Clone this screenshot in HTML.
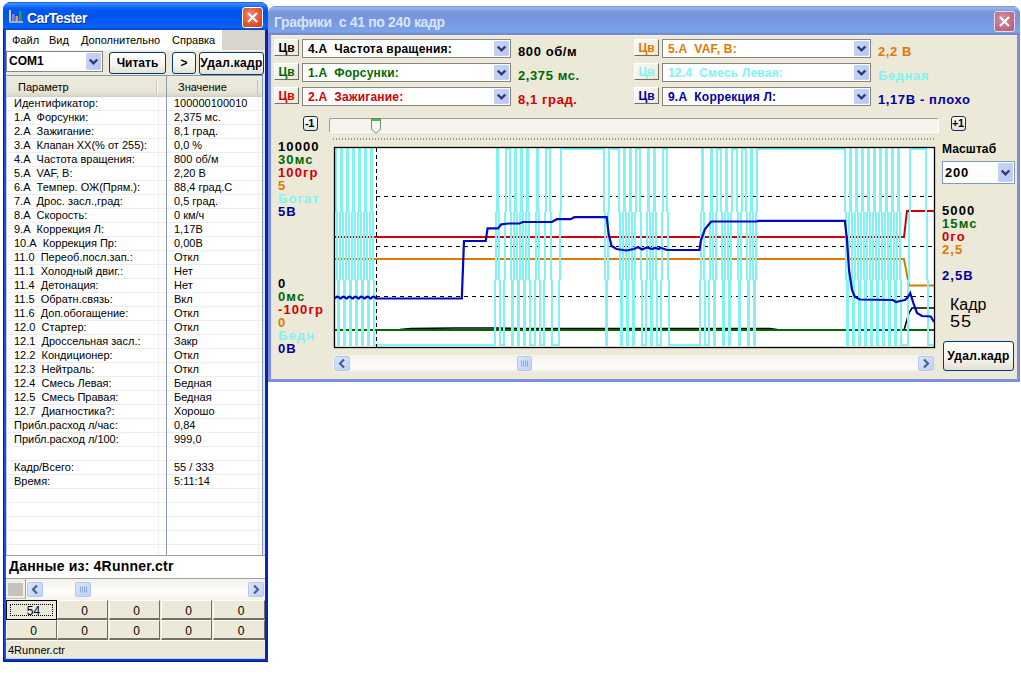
<!DOCTYPE html><html><head><meta charset="utf-8"><style>
*{margin:0;padding:0;box-sizing:border-box}
html,body{width:1021px;height:676px;overflow:hidden;background:#fff;font-family:"Liberation Sans",sans-serif;font-size:11px;color:#000}
.abs{position:absolute}
.t{position:absolute;white-space:pre;line-height:1}
.b{font-weight:bold}
.xpbtn{position:absolute;border:1px solid #003C74;border-radius:3px;background:linear-gradient(#FFFFFF,#F4F3EE 60%,#E3E1D6);font-weight:bold;text-align:center;white-space:pre}
.combo{position:absolute;background:#fff;border:1px solid #7F9DB9}
.ddb{position:absolute;border-radius:1px;background:linear-gradient(#C6D7FA,#B3CBF8 50%,#A9C3F6);border:1px solid #BBCDF1}
.sbb{position:absolute;border-radius:2px;background:linear-gradient(135deg,#DAE6FE,#BCD0F8);border:1px solid #B5C8EF}
.cbtn{position:absolute;background:linear-gradient(135deg,#FAFAF6,#ECE9D8);border-right:1px solid #716F64;border-bottom:1px solid #716F64;border-top:1px solid #fff;border-left:1px solid #fff;font-weight:bold;font-size:12px;text-align:center;line-height:17px}
.gb{position:absolute;background:#ECE9D8;border-top:1px solid #fff;border-left:1px solid #fff;border-right:1px solid #716F64;border-bottom:2px solid #716F64;text-align:center;font-size:12px;line-height:20px;padding-left:4px}
</style></head><body>

<div class="abs" style="left:3px;top:2px;width:265px;height:660px;background:linear-gradient(90deg,#0020B0 0px,#1848E0 1px,#2050E8 2px,#1848E0 3px) left/4px 100% no-repeat,linear-gradient(270deg,#0A1C98 0px,#0C24B0 1px,#0C26B8 3px) right/4px 100% no-repeat,#1848E0;border-radius:8px 8px 0 0;"></div>
<div class="abs" style="left:3px;top:2px;width:265px;height:28px;border-radius:8px 8px 0 0;background:linear-gradient(#0838C8 0px,#3D8EFF 1px,#2C80FF 3px,#0A62F6 6px,#0054EA 9px,#0056EE 16px,#065CF4 22px,#0A62F8 25px,#0050DC 27px,#0040C0 28px);"></div>
<svg class="abs" style="left:9px;top:10px" width="14" height="14">
<rect x="0" y="0" width="2" height="13" fill="#C8D8F0"/><rect x="0" y="11" width="14" height="2" fill="#9AB0D8"/>
<rect x="3" y="4" width="2.5" height="7" fill="#8C7FD8"/><rect x="6.5" y="6" width="2.5" height="5" fill="#F0A030"/><rect x="10" y="1" width="2.5" height="10" fill="#30A040"/></svg>
<div class="t b" style="left:27px;top:11px;font-size:14px;color:#fff;letter-spacing:-0.5px;text-shadow:1px 1px 0 #0A2A9A">CarTester</div>
<div class="abs" style="left:242px;top:7px;width:21px;height:21px;border:1px solid #fff;border-radius:3px;background:radial-gradient(circle at 40% 35%,#F08A68,#E0542E 60%,#C63C1C)"></div>
<svg class="abs" style="left:242px;top:7px" width="21" height="21"><path d="M6 6 L15 15 M15 6 L6 15" stroke="#fff" stroke-width="2.2"/></svg>
<div class="abs" style="left:6px;top:30px;width:259px;height:629px;background:#ECE9D8"></div>
<div class="abs" style="left:6px;top:30px;width:216px;height:20px;background:#fff"></div>
<div class="abs" style="left:222px;top:30px;width:43px;height:20px;background:#D8D5CC"></div>
<div class="abs" style="left:6px;top:50px;width:259px;height:1px;background:#F4F2EA"></div>
<div class="t" style="left:12px;top:35px">Файл</div>
<div class="t" style="left:49px;top:35px">Вид</div>
<div class="t" style="left:81px;top:35px">Дополнительно</div>
<div class="t" style="left:172px;top:35px">Справка</div>
<div class="combo" style="left:6px;top:51px;width:97px;height:21px;border-color:#858585"></div>
<div class="t b" style="left:9px;top:55px;font-size:12px">COM1</div>
<div class="ddb" style="left:86px;top:53px;width:15px;height:17px;border-color:#C4D0F4;background:linear-gradient(135deg,#C8D4F8,#B8C8F4)"></div>
<svg class="abs" style="left:86px;top:53px" width="15" height="17"><polyline points="3.7,6.5 7.5,10.3 11.3,6.5" fill="none" stroke="#2C3C6C" stroke-width="2.4"/></svg>
<div class="xpbtn" style="left:109px;top:52px;width:57px;height:22px;font-size:12px;line-height:20px">Читать</div>
<div class="xpbtn" style="left:172px;top:52px;width:24px;height:22px;font-size:12px;line-height:20px">&gt;</div>
<div class="xpbtn" style="left:199px;top:52px;width:65px;height:23px;font-size:12px;line-height:21px;letter-spacing:0.3px">Удал.кадр</div>
<div class="abs" style="left:6px;top:75px;width:257px;height:480px;background:#fff;border-top:1px solid #8A9AAA;border-left:1px solid #D0D0D0;border-right:1px solid #7F9DB9"></div>
<div class="abs" style="left:263px;top:75px;width:2px;height:480px;background:#D8E8F4"></div>
<div class="abs" style="left:7px;top:76px;width:255px;height:21px;background:linear-gradient(#EBEADB,#E8E6D8 80%,#D8D5C7);border-bottom:1px solid #D4D1C4"></div>
<div class="abs" style="left:156px;top:80px;width:1px;height:14px;background:#C8C5B6"></div>
<div class="abs" style="left:157px;top:80px;width:1px;height:14px;background:#fff"></div>
<div class="abs" style="left:257px;top:80px;width:1px;height:14px;background:#C8C5B6"></div>
<div class="t" style="left:18px;top:82px">Параметр</div>
<div class="t" style="left:178px;top:82px">Значение</div>
<div class="abs" style="left:7px;top:110px;width:255px;height:1px;background:#EDEDED"></div>
<div class="abs" style="left:7px;top:124px;width:255px;height:1px;background:#EDEDED"></div>
<div class="abs" style="left:7px;top:138px;width:255px;height:1px;background:#EDEDED"></div>
<div class="abs" style="left:7px;top:152px;width:255px;height:1px;background:#EDEDED"></div>
<div class="abs" style="left:7px;top:166px;width:255px;height:1px;background:#EDEDED"></div>
<div class="abs" style="left:7px;top:180px;width:255px;height:1px;background:#EDEDED"></div>
<div class="abs" style="left:7px;top:194px;width:255px;height:1px;background:#EDEDED"></div>
<div class="abs" style="left:7px;top:208px;width:255px;height:1px;background:#EDEDED"></div>
<div class="abs" style="left:7px;top:222px;width:255px;height:1px;background:#EDEDED"></div>
<div class="abs" style="left:7px;top:236px;width:255px;height:1px;background:#EDEDED"></div>
<div class="abs" style="left:7px;top:250px;width:255px;height:1px;background:#EDEDED"></div>
<div class="abs" style="left:7px;top:264px;width:255px;height:1px;background:#EDEDED"></div>
<div class="abs" style="left:7px;top:278px;width:255px;height:1px;background:#EDEDED"></div>
<div class="abs" style="left:7px;top:292px;width:255px;height:1px;background:#EDEDED"></div>
<div class="abs" style="left:7px;top:306px;width:255px;height:1px;background:#EDEDED"></div>
<div class="abs" style="left:7px;top:320px;width:255px;height:1px;background:#EDEDED"></div>
<div class="abs" style="left:7px;top:334px;width:255px;height:1px;background:#EDEDED"></div>
<div class="abs" style="left:7px;top:348px;width:255px;height:1px;background:#EDEDED"></div>
<div class="abs" style="left:7px;top:362px;width:255px;height:1px;background:#EDEDED"></div>
<div class="abs" style="left:7px;top:376px;width:255px;height:1px;background:#EDEDED"></div>
<div class="abs" style="left:7px;top:390px;width:255px;height:1px;background:#EDEDED"></div>
<div class="abs" style="left:7px;top:404px;width:255px;height:1px;background:#EDEDED"></div>
<div class="abs" style="left:7px;top:418px;width:255px;height:1px;background:#EDEDED"></div>
<div class="abs" style="left:7px;top:432px;width:255px;height:1px;background:#EDEDED"></div>
<div class="abs" style="left:7px;top:446px;width:255px;height:1px;background:#EDEDED"></div>
<div class="abs" style="left:7px;top:460px;width:255px;height:1px;background:#EDEDED"></div>
<div class="abs" style="left:7px;top:474px;width:255px;height:1px;background:#EDEDED"></div>
<div class="abs" style="left:7px;top:488px;width:255px;height:1px;background:#EDEDED"></div>
<div class="abs" style="left:7px;top:502px;width:255px;height:1px;background:#EDEDED"></div>
<div class="abs" style="left:7px;top:516px;width:255px;height:1px;background:#EDEDED"></div>
<div class="abs" style="left:7px;top:530px;width:255px;height:1px;background:#EDEDED"></div>
<div class="abs" style="left:7px;top:544px;width:255px;height:1px;background:#EDEDED"></div>
<div class="abs" style="left:158px;top:97px;width:1px;height:458px;background:#F0F0F0"></div>
<div class="abs" style="left:258px;top:97px;width:1px;height:458px;background:#F0F0F0"></div>
<div class="abs" style="left:166px;top:76px;width:1px;height:479px;background:#8C9CB0"></div>
<div class="t" style="left:14px;top:98px">Идентификатор:</div>
<div class="t" style="left:174px;top:98px">100000100010</div>
<div class="t" style="left:14px;top:112px">1.А  Форсунки:</div>
<div class="t" style="left:174px;top:112px">2,375 мс.</div>
<div class="t" style="left:14px;top:126px">2.А  Зажигание:</div>
<div class="t" style="left:174px;top:126px">8,1 град.</div>
<div class="t" style="left:14px;top:140px">3.А  Клапан ХХ(% от 255):</div>
<div class="t" style="left:174px;top:140px">0,0 %</div>
<div class="t" style="left:14px;top:154px">4.А  Частота вращения:</div>
<div class="t" style="left:174px;top:154px">800 об/м</div>
<div class="t" style="left:14px;top:168px">5.А  VAF, В:</div>
<div class="t" style="left:174px;top:168px">2,20 В</div>
<div class="t" style="left:14px;top:182px">6.А  Темпер. ОЖ(Прям.):</div>
<div class="t" style="left:174px;top:182px">88,4 град.С</div>
<div class="t" style="left:14px;top:196px">7.А  Дрос. засл.,град:</div>
<div class="t" style="left:174px;top:196px">0,5 град.</div>
<div class="t" style="left:14px;top:210px">8.А  Скорость:</div>
<div class="t" style="left:174px;top:210px">0 км/ч</div>
<div class="t" style="left:14px;top:224px">9.А  Коррекция Л:</div>
<div class="t" style="left:174px;top:224px">1,17В</div>
<div class="t" style="left:14px;top:238px">10.А  Коррекция Пр:</div>
<div class="t" style="left:174px;top:238px">0,00В</div>
<div class="t" style="left:14px;top:252px">11.0  Переоб.посл.зап.:</div>
<div class="t" style="left:174px;top:252px">Откл</div>
<div class="t" style="left:14px;top:266px">11.1  Холодный двиг.:</div>
<div class="t" style="left:174px;top:266px">Нет</div>
<div class="t" style="left:14px;top:280px">11.4  Детонация:</div>
<div class="t" style="left:174px;top:280px">Нет</div>
<div class="t" style="left:14px;top:294px">11.5  Обратн.связь:</div>
<div class="t" style="left:174px;top:294px">Вкл</div>
<div class="t" style="left:14px;top:308px">11.6  Доп.обогащение:</div>
<div class="t" style="left:174px;top:308px">Откл</div>
<div class="t" style="left:14px;top:322px">12.0  Стартер:</div>
<div class="t" style="left:174px;top:322px">Откл</div>
<div class="t" style="left:14px;top:336px">12.1  Дроссельная засл.:</div>
<div class="t" style="left:174px;top:336px">Закр</div>
<div class="t" style="left:14px;top:350px">12.2  Кондиционер:</div>
<div class="t" style="left:174px;top:350px">Откл</div>
<div class="t" style="left:14px;top:364px">12.3  Нейтраль:</div>
<div class="t" style="left:174px;top:364px">Откл</div>
<div class="t" style="left:14px;top:378px">12.4  Смесь Левая:</div>
<div class="t" style="left:174px;top:378px">Бедная</div>
<div class="t" style="left:14px;top:392px">12.5  Смесь Правая:</div>
<div class="t" style="left:174px;top:392px">Бедная</div>
<div class="t" style="left:14px;top:406px">12.7  Диагностика?:</div>
<div class="t" style="left:174px;top:406px">Хорошо</div>
<div class="t" style="left:14px;top:420px">Прибл.расход л/час:</div>
<div class="t" style="left:174px;top:420px">0,84</div>
<div class="t" style="left:14px;top:434px">Прибл.расход л/100:</div>
<div class="t" style="left:174px;top:434px">999,0</div>
<div class="t" style="left:14px;top:462px">Кадр/Всего:</div>
<div class="t" style="left:174px;top:462px">55 / 333</div>
<div class="t" style="left:14px;top:476px">Время:</div>
<div class="t" style="left:174px;top:476px">5:11:14</div>
<div class="abs" style="left:6px;top:555px;width:259px;height:24px;background:#fff;border-top:1px solid #A0A0A0;border-bottom:1px solid #A0A0A0"></div>
<div class="t b" style="left:9px;top:559px;font-size:14px;letter-spacing:0.2px">Данные из: 4Runner.ctr</div>
<div class="abs" style="left:6px;top:579px;width:259px;height:21px;background:linear-gradient(#F3F1EC,#FEFEFB 60%,#F3F1EC)"></div>
<div class="abs" style="left:6px;top:579px;width:20px;height:20px;background:#F0EEE4;border-right:1px solid #A8A490;border-bottom:1px solid #C8C4B4"></div>
<div class="abs" style="left:8px;top:583px;width:15px;height:13px;background:#C6C2BA"></div>
<div class="sbb" style="left:27px;top:582px;width:16px;height:15px"></div>
<svg class="abs" style="left:27px;top:582px" width="16" height="15"><polyline points="10.0,3.5 6.0,7.5 10.0,11.5" fill="none" stroke="#4D6185" stroke-width="2.2"/></svg>
<div class="sbb" style="left:75px;top:582px;width:16px;height:15px"></div>
<svg class="abs" style="left:75px;top:582px" width="16" height="15"><path d="M5.5 4.5v6M7.5 4.5v6M9.5 4.5v6M11.5 4.5v6" stroke="#8EA4D8" stroke-width="1"/></svg>
<div class="sbb" style="left:248px;top:582px;width:16px;height:15px"></div>
<svg class="abs" style="left:248px;top:582px" width="16" height="15"><polyline points="6.0,3.5 10.0,7.5 6.0,11.5" fill="none" stroke="#4D6185" stroke-width="2.2"/></svg>
<div class="gb" style="left:6px;top:600px;width:51px;height:20px;border:1px solid #000;">54</div>
<div class="abs" style="left:10px;top:604px;width:43px;height:12px;border:1px dotted #000"></div>
<div class="gb" style="left:57px;top:600px;width:51px;height:20px;">0</div>
<div class="gb" style="left:109px;top:600px;width:51px;height:20px;">0</div>
<div class="gb" style="left:161px;top:600px;width:51px;height:20px;">0</div>
<div class="gb" style="left:213px;top:600px;width:52px;height:20px;">0</div>
<div class="gb" style="left:6px;top:620px;width:51px;height:20px;">0</div>
<div class="gb" style="left:57px;top:620px;width:51px;height:20px;">0</div>
<div class="gb" style="left:109px;top:620px;width:51px;height:20px;">0</div>
<div class="gb" style="left:161px;top:620px;width:51px;height:20px;">0</div>
<div class="gb" style="left:213px;top:620px;width:52px;height:20px;">0</div>
<div class="abs" style="left:6px;top:640px;width:259px;height:19px;background:#ECE9D8;border-top:1px solid #fff"></div>
<div class="t" style="left:8px;top:645px">4Runner.ctr</div>
<div class="abs" style="left:3px;top:659px;width:265px;height:3px;background:linear-gradient(#1040D8,#0018A8)"></div>
<div class="abs" style="left:6px;top:658px;width:259px;height:1px;background:#B8D4F4"></div>
<div class="abs" style="left:3px;top:661px;width:265px;height:1px;background:#001EA0"></div>
<div class="abs" style="left:3px;top:30px;width:1px;height:632px;background:#001EA0"></div>
<div class="abs" style="left:268px;top:6px;width:752px;height:376px;background:#7F8FE0;border-radius:8px 8px 0 0"></div>
<div class="abs" style="left:268px;top:6px;width:752px;height:29px;border-radius:8px 8px 0 0;background:linear-gradient(#6E7EC8 0px,#9AB2F2 1px,#94AEEE 3px,#7A9CDC 5px,#7896D8 7px,#7A94E0 10px,#7898E2 16px,#7AA2E8 24px,#7AA4E8 26px,#7484D0 28px,#7080C8 29px)"></div>
<div class="t b" style="left:274px;top:15px;font-size:14px;letter-spacing:-0.35px;color:#D8E4F8">Графики  с 41 по 240 кадр</div>
<div class="abs" style="left:994px;top:11px;width:21px;height:21px;border:1px solid #E8D8F0;border-radius:3px;background:radial-gradient(circle at 40% 35%,#D88FA0,#C06C84 60%,#A85A74)"></div>
<svg class="abs" style="left:994px;top:11px" width="21" height="21"><path d="M6 6 L15 15 M15 6 L6 15" stroke="#fff" stroke-width="2.2"/></svg>
<div class="abs" style="left:271px;top:35px;width:746px;height:344px;background:#ECE9D8;border-top:1px solid #F4F6F0"></div>
<div class="cbtn" style="left:274px;top:39px;width:25px;height:17px;color:#000000">Цв</div>
<div class="combo" style="left:302px;top:39px;width:209px;height:19px;border-color:#858585"></div><div class="t b" style="left:308px;top:43px;font-size:12px;letter-spacing:0.2px;color:#000000">4.А  Частота вращения:</div><div class="ddb" style="left:494px;top:41px;width:15px;height:15px;border-color:#C4D0F4;background:linear-gradient(135deg,#C8D4F8,#B8C8F4)"></div><svg class="abs" style="left:494px;top:41px" width="15" height="15"><polyline points="3.7,5.5 7.5,9.3 11.3,5.5" fill="none" stroke="#2C3C6C" stroke-width="2.4"/></svg>
<div class="t b" style="left:518px;top:45px;font-size:13px;letter-spacing:0.6px;color:#000000">800 об/м</div>
<div class="cbtn" style="left:274px;top:63px;width:25px;height:17px;color:#006800">Цв</div>
<div class="combo" style="left:302px;top:63px;width:209px;height:19px;border-color:#858585"></div><div class="t b" style="left:308px;top:67px;font-size:12px;letter-spacing:0.2px;color:#006800">1.А  Форсунки:</div><div class="ddb" style="left:494px;top:65px;width:15px;height:15px;border-color:#C4D0F4;background:linear-gradient(135deg,#C8D4F8,#B8C8F4)"></div><svg class="abs" style="left:494px;top:65px" width="15" height="15"><polyline points="3.7,5.5 7.5,9.3 11.3,5.5" fill="none" stroke="#2C3C6C" stroke-width="2.4"/></svg>
<div class="t b" style="left:518px;top:69px;font-size:13px;letter-spacing:0.6px;color:#006800">2,375 мс.</div>
<div class="cbtn" style="left:274px;top:87px;width:25px;height:17px;color:#D00000">Цв</div>
<div class="combo" style="left:302px;top:87px;width:209px;height:19px;border-color:#858585"></div><div class="t b" style="left:308px;top:91px;font-size:12px;letter-spacing:0.2px;color:#D00000">2.А  Зажигание:</div><div class="ddb" style="left:494px;top:89px;width:15px;height:15px;border-color:#C4D0F4;background:linear-gradient(135deg,#C8D4F8,#B8C8F4)"></div><svg class="abs" style="left:494px;top:89px" width="15" height="15"><polyline points="3.7,5.5 7.5,9.3 11.3,5.5" fill="none" stroke="#2C3C6C" stroke-width="2.4"/></svg>
<div class="t b" style="left:518px;top:93px;font-size:13px;letter-spacing:0.6px;color:#D00000">8,1 град.</div>
<div class="cbtn" style="left:634px;top:39px;width:25px;height:17px;color:#E07800">Цв</div>
<div class="combo" style="left:662px;top:39px;width:209px;height:19px;border-color:#858585"></div><div class="t b" style="left:668px;top:43px;font-size:12px;letter-spacing:0.2px;color:#E07800">5.А  VAF, В:</div><div class="ddb" style="left:854px;top:41px;width:15px;height:15px;border-color:#C4D0F4;background:linear-gradient(135deg,#C8D4F8,#B8C8F4)"></div><svg class="abs" style="left:854px;top:41px" width="15" height="15"><polyline points="3.7,5.5 7.5,9.3 11.3,5.5" fill="none" stroke="#2C3C6C" stroke-width="2.4"/></svg>
<div class="t b" style="left:878px;top:45px;font-size:13px;letter-spacing:0.6px;color:#E07800">2,2 В</div>
<div class="cbtn" style="left:634px;top:63px;width:25px;height:17px;color:#80F4F4">Цв</div>
<div class="combo" style="left:662px;top:63px;width:209px;height:19px;border-color:#858585"></div><div class="t b" style="left:668px;top:67px;font-size:12px;letter-spacing:0.2px;color:#80F4F4">12.4  Смесь Левая:</div><div class="ddb" style="left:854px;top:65px;width:15px;height:15px;border-color:#C4D0F4;background:linear-gradient(135deg,#C8D4F8,#B8C8F4)"></div><svg class="abs" style="left:854px;top:65px" width="15" height="15"><polyline points="3.7,5.5 7.5,9.3 11.3,5.5" fill="none" stroke="#2C3C6C" stroke-width="2.4"/></svg>
<div class="t b" style="left:878px;top:69px;font-size:13px;letter-spacing:0.6px;color:#80F4F4">Бедная</div>
<div class="cbtn" style="left:634px;top:87px;width:25px;height:17px;color:#0000A0">Цв</div>
<div class="combo" style="left:662px;top:87px;width:209px;height:19px;border-color:#858585"></div><div class="t b" style="left:668px;top:91px;font-size:12px;letter-spacing:0.2px;color:#0000A0">9.А  Коррекция Л:</div><div class="ddb" style="left:854px;top:89px;width:15px;height:15px;border-color:#C4D0F4;background:linear-gradient(135deg,#C8D4F8,#B8C8F4)"></div><svg class="abs" style="left:854px;top:89px" width="15" height="15"><polyline points="3.7,5.5 7.5,9.3 11.3,5.5" fill="none" stroke="#2C3C6C" stroke-width="2.4"/></svg>
<div class="t b" style="left:878px;top:93px;font-size:13px;letter-spacing:0.6px;color:#0000A0">1,17В - плохо</div>
<div class="abs" style="left:303px;top:116px;width:15px;height:15px;border:1px solid #1C2C4C;border-radius:3px;background:linear-gradient(#fff,#E0E4EC)"></div>
<div class="t b" style="left:305px;top:118px;font-size:11px;letter-spacing:-0.5px">-1</div>
<div class="abs" style="left:951px;top:116px;width:15px;height:15px;border:1px solid #1C2C4C;border-radius:3px;background:linear-gradient(#fff,#E0E4EC)"></div>
<div class="t b" style="left:952px;top:118px;font-size:11px;letter-spacing:-0.5px">+1</div>
<div class="abs" style="left:329px;top:118px;width:610px;height:15px;background:#F4F3EE;border:1px solid #9D9C99;border-radius:2px;border-bottom-color:#fff;border-right-color:#fff"></div>
<svg class="abs" style="left:371px;top:118px" width="10" height="17"><path d="M0.5 0.5 H9.5 V11 L5 15.5 L0.5 11 Z" fill="#F7F7F4" stroke="#6C8A6C" stroke-width="1"/><rect x="1" y="1" width="8" height="2" fill="#48B848"/></svg>
<svg class="abs" style="left:333px;top:138px" width="610" height="4"><rect x="0" y="0" width="1" height="2" fill="#9C9888"/><rect x="3" y="0" width="1" height="2" fill="#9C9888"/><rect x="6" y="0" width="1" height="2" fill="#9C9888"/><rect x="9" y="0" width="1" height="2" fill="#9C9888"/><rect x="12" y="0" width="1" height="2" fill="#9C9888"/><rect x="15" y="0" width="1" height="2" fill="#9C9888"/><rect x="18" y="0" width="1" height="2" fill="#9C9888"/><rect x="21" y="0" width="1" height="2" fill="#9C9888"/><rect x="24" y="0" width="1" height="2" fill="#9C9888"/><rect x="27" y="0" width="1" height="2" fill="#9C9888"/><rect x="30" y="0" width="1" height="2" fill="#9C9888"/><rect x="33" y="0" width="1" height="2" fill="#9C9888"/><rect x="36" y="0" width="1" height="2" fill="#9C9888"/><rect x="39" y="0" width="1" height="2" fill="#9C9888"/><rect x="42" y="0" width="1" height="2" fill="#9C9888"/><rect x="45" y="0" width="1" height="2" fill="#9C9888"/><rect x="48" y="0" width="1" height="2" fill="#9C9888"/><rect x="51" y="0" width="1" height="2" fill="#9C9888"/><rect x="54" y="0" width="1" height="2" fill="#9C9888"/><rect x="57" y="0" width="1" height="2" fill="#9C9888"/><rect x="60" y="0" width="1" height="2" fill="#9C9888"/><rect x="63" y="0" width="1" height="2" fill="#9C9888"/><rect x="66" y="0" width="1" height="2" fill="#9C9888"/><rect x="69" y="0" width="1" height="2" fill="#9C9888"/><rect x="72" y="0" width="1" height="2" fill="#9C9888"/><rect x="75" y="0" width="1" height="2" fill="#9C9888"/><rect x="78" y="0" width="1" height="2" fill="#9C9888"/><rect x="81" y="0" width="1" height="2" fill="#9C9888"/><rect x="84" y="0" width="1" height="2" fill="#9C9888"/><rect x="87" y="0" width="1" height="2" fill="#9C9888"/><rect x="90" y="0" width="1" height="2" fill="#9C9888"/><rect x="93" y="0" width="1" height="2" fill="#9C9888"/><rect x="96" y="0" width="1" height="2" fill="#9C9888"/><rect x="99" y="0" width="1" height="2" fill="#9C9888"/><rect x="102" y="0" width="1" height="2" fill="#9C9888"/><rect x="105" y="0" width="1" height="2" fill="#9C9888"/><rect x="108" y="0" width="1" height="2" fill="#9C9888"/><rect x="111" y="0" width="1" height="2" fill="#9C9888"/><rect x="114" y="0" width="1" height="2" fill="#9C9888"/><rect x="117" y="0" width="1" height="2" fill="#9C9888"/><rect x="120" y="0" width="1" height="2" fill="#9C9888"/><rect x="123" y="0" width="1" height="2" fill="#9C9888"/><rect x="126" y="0" width="1" height="2" fill="#9C9888"/><rect x="129" y="0" width="1" height="2" fill="#9C9888"/><rect x="132" y="0" width="1" height="2" fill="#9C9888"/><rect x="135" y="0" width="1" height="2" fill="#9C9888"/><rect x="138" y="0" width="1" height="2" fill="#9C9888"/><rect x="141" y="0" width="1" height="2" fill="#9C9888"/><rect x="144" y="0" width="1" height="2" fill="#9C9888"/><rect x="147" y="0" width="1" height="2" fill="#9C9888"/><rect x="150" y="0" width="1" height="2" fill="#9C9888"/><rect x="153" y="0" width="1" height="2" fill="#9C9888"/><rect x="156" y="0" width="1" height="2" fill="#9C9888"/><rect x="159" y="0" width="1" height="2" fill="#9C9888"/><rect x="162" y="0" width="1" height="2" fill="#9C9888"/><rect x="165" y="0" width="1" height="2" fill="#9C9888"/><rect x="168" y="0" width="1" height="2" fill="#9C9888"/><rect x="171" y="0" width="1" height="2" fill="#9C9888"/><rect x="174" y="0" width="1" height="2" fill="#9C9888"/><rect x="177" y="0" width="1" height="2" fill="#9C9888"/><rect x="180" y="0" width="1" height="2" fill="#9C9888"/><rect x="183" y="0" width="1" height="2" fill="#9C9888"/><rect x="186" y="0" width="1" height="2" fill="#9C9888"/><rect x="189" y="0" width="1" height="2" fill="#9C9888"/><rect x="192" y="0" width="1" height="2" fill="#9C9888"/><rect x="195" y="0" width="1" height="2" fill="#9C9888"/><rect x="198" y="0" width="1" height="2" fill="#9C9888"/><rect x="201" y="0" width="1" height="2" fill="#9C9888"/><rect x="204" y="0" width="1" height="2" fill="#9C9888"/><rect x="207" y="0" width="1" height="2" fill="#9C9888"/><rect x="210" y="0" width="1" height="2" fill="#9C9888"/><rect x="213" y="0" width="1" height="2" fill="#9C9888"/><rect x="216" y="0" width="1" height="2" fill="#9C9888"/><rect x="219" y="0" width="1" height="2" fill="#9C9888"/><rect x="222" y="0" width="1" height="2" fill="#9C9888"/><rect x="225" y="0" width="1" height="2" fill="#9C9888"/><rect x="228" y="0" width="1" height="2" fill="#9C9888"/><rect x="231" y="0" width="1" height="2" fill="#9C9888"/><rect x="234" y="0" width="1" height="2" fill="#9C9888"/><rect x="237" y="0" width="1" height="2" fill="#9C9888"/><rect x="240" y="0" width="1" height="2" fill="#9C9888"/><rect x="243" y="0" width="1" height="2" fill="#9C9888"/><rect x="246" y="0" width="1" height="2" fill="#9C9888"/><rect x="249" y="0" width="1" height="2" fill="#9C9888"/><rect x="252" y="0" width="1" height="2" fill="#9C9888"/><rect x="255" y="0" width="1" height="2" fill="#9C9888"/><rect x="258" y="0" width="1" height="2" fill="#9C9888"/><rect x="261" y="0" width="1" height="2" fill="#9C9888"/><rect x="264" y="0" width="1" height="2" fill="#9C9888"/><rect x="267" y="0" width="1" height="2" fill="#9C9888"/><rect x="270" y="0" width="1" height="2" fill="#9C9888"/><rect x="273" y="0" width="1" height="2" fill="#9C9888"/><rect x="276" y="0" width="1" height="2" fill="#9C9888"/><rect x="279" y="0" width="1" height="2" fill="#9C9888"/><rect x="282" y="0" width="1" height="2" fill="#9C9888"/><rect x="285" y="0" width="1" height="2" fill="#9C9888"/><rect x="288" y="0" width="1" height="2" fill="#9C9888"/><rect x="291" y="0" width="1" height="2" fill="#9C9888"/><rect x="294" y="0" width="1" height="2" fill="#9C9888"/><rect x="297" y="0" width="1" height="2" fill="#9C9888"/><rect x="300" y="0" width="1" height="2" fill="#9C9888"/><rect x="303" y="0" width="1" height="2" fill="#9C9888"/><rect x="306" y="0" width="1" height="2" fill="#9C9888"/><rect x="309" y="0" width="1" height="2" fill="#9C9888"/><rect x="312" y="0" width="1" height="2" fill="#9C9888"/><rect x="315" y="0" width="1" height="2" fill="#9C9888"/><rect x="318" y="0" width="1" height="2" fill="#9C9888"/><rect x="321" y="0" width="1" height="2" fill="#9C9888"/><rect x="324" y="0" width="1" height="2" fill="#9C9888"/><rect x="327" y="0" width="1" height="2" fill="#9C9888"/><rect x="330" y="0" width="1" height="2" fill="#9C9888"/><rect x="333" y="0" width="1" height="2" fill="#9C9888"/><rect x="336" y="0" width="1" height="2" fill="#9C9888"/><rect x="339" y="0" width="1" height="2" fill="#9C9888"/><rect x="342" y="0" width="1" height="2" fill="#9C9888"/><rect x="345" y="0" width="1" height="2" fill="#9C9888"/><rect x="348" y="0" width="1" height="2" fill="#9C9888"/><rect x="351" y="0" width="1" height="2" fill="#9C9888"/><rect x="354" y="0" width="1" height="2" fill="#9C9888"/><rect x="357" y="0" width="1" height="2" fill="#9C9888"/><rect x="360" y="0" width="1" height="2" fill="#9C9888"/><rect x="363" y="0" width="1" height="2" fill="#9C9888"/><rect x="366" y="0" width="1" height="2" fill="#9C9888"/><rect x="369" y="0" width="1" height="2" fill="#9C9888"/><rect x="372" y="0" width="1" height="2" fill="#9C9888"/><rect x="375" y="0" width="1" height="2" fill="#9C9888"/><rect x="378" y="0" width="1" height="2" fill="#9C9888"/><rect x="381" y="0" width="1" height="2" fill="#9C9888"/><rect x="384" y="0" width="1" height="2" fill="#9C9888"/><rect x="387" y="0" width="1" height="2" fill="#9C9888"/><rect x="390" y="0" width="1" height="2" fill="#9C9888"/><rect x="393" y="0" width="1" height="2" fill="#9C9888"/><rect x="396" y="0" width="1" height="2" fill="#9C9888"/><rect x="399" y="0" width="1" height="2" fill="#9C9888"/><rect x="402" y="0" width="1" height="2" fill="#9C9888"/><rect x="405" y="0" width="1" height="2" fill="#9C9888"/><rect x="408" y="0" width="1" height="2" fill="#9C9888"/><rect x="411" y="0" width="1" height="2" fill="#9C9888"/><rect x="414" y="0" width="1" height="2" fill="#9C9888"/><rect x="417" y="0" width="1" height="2" fill="#9C9888"/><rect x="420" y="0" width="1" height="2" fill="#9C9888"/><rect x="423" y="0" width="1" height="2" fill="#9C9888"/><rect x="426" y="0" width="1" height="2" fill="#9C9888"/><rect x="429" y="0" width="1" height="2" fill="#9C9888"/><rect x="432" y="0" width="1" height="2" fill="#9C9888"/><rect x="435" y="0" width="1" height="2" fill="#9C9888"/><rect x="438" y="0" width="1" height="2" fill="#9C9888"/><rect x="441" y="0" width="1" height="2" fill="#9C9888"/><rect x="444" y="0" width="1" height="2" fill="#9C9888"/><rect x="447" y="0" width="1" height="2" fill="#9C9888"/><rect x="450" y="0" width="1" height="2" fill="#9C9888"/><rect x="453" y="0" width="1" height="2" fill="#9C9888"/><rect x="456" y="0" width="1" height="2" fill="#9C9888"/><rect x="459" y="0" width="1" height="2" fill="#9C9888"/><rect x="462" y="0" width="1" height="2" fill="#9C9888"/><rect x="465" y="0" width="1" height="2" fill="#9C9888"/><rect x="468" y="0" width="1" height="2" fill="#9C9888"/><rect x="471" y="0" width="1" height="2" fill="#9C9888"/><rect x="474" y="0" width="1" height="2" fill="#9C9888"/><rect x="477" y="0" width="1" height="2" fill="#9C9888"/><rect x="480" y="0" width="1" height="2" fill="#9C9888"/><rect x="483" y="0" width="1" height="2" fill="#9C9888"/><rect x="486" y="0" width="1" height="2" fill="#9C9888"/><rect x="489" y="0" width="1" height="2" fill="#9C9888"/><rect x="492" y="0" width="1" height="2" fill="#9C9888"/><rect x="495" y="0" width="1" height="2" fill="#9C9888"/><rect x="498" y="0" width="1" height="2" fill="#9C9888"/><rect x="501" y="0" width="1" height="2" fill="#9C9888"/><rect x="504" y="0" width="1" height="2" fill="#9C9888"/><rect x="507" y="0" width="1" height="2" fill="#9C9888"/><rect x="510" y="0" width="1" height="2" fill="#9C9888"/><rect x="513" y="0" width="1" height="2" fill="#9C9888"/><rect x="516" y="0" width="1" height="2" fill="#9C9888"/><rect x="519" y="0" width="1" height="2" fill="#9C9888"/><rect x="522" y="0" width="1" height="2" fill="#9C9888"/><rect x="525" y="0" width="1" height="2" fill="#9C9888"/><rect x="528" y="0" width="1" height="2" fill="#9C9888"/><rect x="531" y="0" width="1" height="2" fill="#9C9888"/><rect x="534" y="0" width="1" height="2" fill="#9C9888"/><rect x="537" y="0" width="1" height="2" fill="#9C9888"/><rect x="540" y="0" width="1" height="2" fill="#9C9888"/><rect x="543" y="0" width="1" height="2" fill="#9C9888"/><rect x="546" y="0" width="1" height="2" fill="#9C9888"/><rect x="549" y="0" width="1" height="2" fill="#9C9888"/><rect x="552" y="0" width="1" height="2" fill="#9C9888"/><rect x="555" y="0" width="1" height="2" fill="#9C9888"/><rect x="558" y="0" width="1" height="2" fill="#9C9888"/><rect x="561" y="0" width="1" height="2" fill="#9C9888"/><rect x="564" y="0" width="1" height="2" fill="#9C9888"/><rect x="567" y="0" width="1" height="2" fill="#9C9888"/><rect x="570" y="0" width="1" height="2" fill="#9C9888"/><rect x="573" y="0" width="1" height="2" fill="#9C9888"/><rect x="576" y="0" width="1" height="2" fill="#9C9888"/><rect x="579" y="0" width="1" height="2" fill="#9C9888"/><rect x="582" y="0" width="1" height="2" fill="#9C9888"/><rect x="585" y="0" width="1" height="2" fill="#9C9888"/><rect x="588" y="0" width="1" height="2" fill="#9C9888"/><rect x="591" y="0" width="1" height="2" fill="#9C9888"/><rect x="594" y="0" width="1" height="2" fill="#9C9888"/><rect x="597" y="0" width="1" height="2" fill="#9C9888"/><rect x="600" y="0" width="1" height="2" fill="#9C9888"/></svg>
<div class="t b" style="left:278px;top:140px;font-size:13px;letter-spacing:1.1px;color:#000000">10000</div>
<div class="t b" style="left:278px;top:153px;font-size:13px;letter-spacing:1.1px;color:#006800">30мс</div>
<div class="t b" style="left:278px;top:166px;font-size:13px;letter-spacing:1.1px;color:#D00000">100гр</div>
<div class="t b" style="left:278px;top:179px;font-size:13px;letter-spacing:1.1px;color:#E07800">5</div>
<div class="t b" style="left:278px;top:192px;font-size:13px;letter-spacing:1.1px;color:#80F4F4">Богат</div>
<div class="t b" style="left:278px;top:205px;font-size:13px;letter-spacing:1.1px;color:#0000A0">5В</div>
<div class="t b" style="left:278px;top:277px;font-size:13px;letter-spacing:1.1px;color:#000000">0</div>
<div class="t b" style="left:278px;top:290px;font-size:13px;letter-spacing:1.1px;color:#006800">0мс</div>
<div class="t b" style="left:278px;top:303px;font-size:13px;letter-spacing:1.1px;color:#D00000">-100гр</div>
<div class="t b" style="left:278px;top:316px;font-size:13px;letter-spacing:1.1px;color:#E07800">0</div>
<div class="t b" style="left:278px;top:329px;font-size:13px;letter-spacing:1.1px;color:#80F4F4">Бедн</div>
<div class="t b" style="left:278px;top:342px;font-size:13px;letter-spacing:1.1px;color:#0000A0">0В</div>
<div class="t b" style="left:942px;top:204px;font-size:13px;letter-spacing:1.1px;color:#000000">5000</div>
<div class="t b" style="left:942px;top:217px;font-size:13px;letter-spacing:1.1px;color:#006800">15мс</div>
<div class="t b" style="left:942px;top:230px;font-size:13px;letter-spacing:1.1px;color:#D00000">0го</div>
<div class="t b" style="left:942px;top:243px;font-size:13px;letter-spacing:1.1px;color:#E07800">2,5</div>
<div class="t b" style="left:942px;top:269px;font-size:13px;letter-spacing:1.1px;color:#0000A0">2,5В</div>
<div class="t b" style="left:942px;top:143px;font-size:12px;letter-spacing:0.1px">Масштаб</div>
<div class="combo" style="left:942px;top:161px;width:73px;height:23px"></div>
<div class="t b" style="left:945px;top:166px;font-size:13px;letter-spacing:0.8px">200</div>
<div class="ddb" style="left:998px;top:163px;width:15px;height:19px;border-color:#C4D0F4;background:linear-gradient(135deg,#C8D4F8,#B8C8F4)"></div>
<svg class="abs" style="left:998px;top:163px" width="15" height="19"><polyline points="3.7,7.5 7.5,11.3 11.3,7.5" fill="none" stroke="#2C3C6C" stroke-width="2.4"/></svg>
<div class="t" style="left:950px;top:297px;font-size:16px">Кадр</div>
<div class="t" style="left:950px;top:314px;font-size:16px;letter-spacing:0.8px;transform:scaleX(1.13);transform-origin:0 0">55</div>
<div class="xpbtn" style="left:943px;top:341px;width:71px;height:30px;font-size:12px;line-height:28px;letter-spacing:0.3px">Удал.кадр</div>
<div class="abs" style="left:333px;top:355px;width:601px;height:17px;background:linear-gradient(#F3F1EC,#FEFEFB 70%,#F0EEE6)"></div>
<div class="sbb" style="left:334px;top:356px;width:16px;height:15px"></div>
<svg class="abs" style="left:334px;top:356px" width="16" height="15"><polyline points="10.0,3.5 6.0,7.5 10.0,11.5" fill="none" stroke="#4D6185" stroke-width="2.2"/></svg>
<div class="sbb" style="left:517px;top:356px;width:15px;height:15px"></div>
<svg class="abs" style="left:517px;top:356px" width="15" height="15"><path d="M4.5 4.5v6M6.5 4.5v6M8.5 4.5v6M10.5 4.5v6" stroke="#8EA4D8" stroke-width="1"/></svg>
<div class="sbb" style="left:918px;top:356px;width:16px;height:15px"></div>
<svg class="abs" style="left:918px;top:356px" width="16" height="15"><polyline points="6.0,3.5 10.0,7.5 6.0,11.5" fill="none" stroke="#4D6185" stroke-width="2.2"/></svg>
<svg class="abs" style="left:333px;top:146px" width="603" height="203">
<rect x="1" y="1" width="601" height="201" fill="#fff"/>
<line x1="43" y1="50.5" x2="601" y2="50.5" stroke="#000" stroke-width="1" stroke-dasharray="4,4" shape-rendering="crispEdges"/>
<line x1="43" y1="100.5" x2="601" y2="100.5" stroke="#000" stroke-width="1" stroke-dasharray="4,4" shape-rendering="crispEdges"/>
<line x1="43" y1="150.5" x2="601" y2="150.5" stroke="#000" stroke-width="1" stroke-dasharray="4,4" shape-rendering="crispEdges"/>
<polyline points="2,91 571,91 574,65 602,65" fill="none" stroke="#D00000" stroke-width="2"/>
<polyline points="2,113 571,113 576,139.5 602,139.5" fill="none" stroke="#E07800" stroke-width="2"/>
<polyline points="2,184 67,183.5 78,182.5 122,182 162,182 187,182.5 437,182.5 447,184 571,184 576,167 579,162 602,162" fill="none" stroke="#000" stroke-width="1.6"/>
<polyline points="2,184 602,184" fill="none" stroke="#006800" stroke-width="2"/>
<g fill="#80F4F4" shape-rendering="crispEdges"><rect x="1" y="2" width="2" height="64"/><rect x="0" y="66" width="2" height="68"/><rect x="-1" y="134" width="2" height="66"/><rect x="2" y="2" width="2" height="64"/><rect x="3" y="66" width="2" height="68"/><rect x="4" y="134" width="2" height="66"/><rect x="1" y="2" width="3" height="2"/><rect x="7" y="2" width="2" height="64"/><rect x="6" y="66" width="2" height="68"/><rect x="5" y="134" width="2" height="66"/><rect x="8" y="2" width="2" height="64"/><rect x="9" y="66" width="2" height="68"/><rect x="10" y="134" width="2" height="66"/><rect x="7" y="2" width="3" height="2"/><rect x="4" y="198" width="3" height="2"/><rect x="13" y="2" width="2" height="64"/><rect x="12" y="66" width="2" height="68"/><rect x="11" y="134" width="2" height="66"/><rect x="14" y="2" width="2" height="64"/><rect x="15" y="66" width="2" height="68"/><rect x="16" y="134" width="2" height="66"/><rect x="13" y="2" width="3" height="2"/><rect x="10" y="198" width="3" height="2"/><rect x="19" y="2" width="2" height="64"/><rect x="18" y="66" width="2" height="68"/><rect x="17" y="134" width="2" height="66"/><rect x="20" y="2" width="2" height="64"/><rect x="21" y="66" width="2" height="68"/><rect x="22" y="134" width="2" height="66"/><rect x="19" y="2" width="3" height="2"/><rect x="16" y="198" width="3" height="2"/><rect x="25" y="2" width="2" height="64"/><rect x="24" y="66" width="2" height="68"/><rect x="23" y="134" width="2" height="66"/><rect x="26" y="2" width="2" height="64"/><rect x="27" y="66" width="2" height="68"/><rect x="28" y="134" width="2" height="66"/><rect x="25" y="2" width="3" height="2"/><rect x="22" y="198" width="3" height="2"/><rect x="31" y="2" width="2" height="64"/><rect x="30" y="66" width="2" height="68"/><rect x="29" y="134" width="2" height="66"/><rect x="32" y="2" width="2" height="64"/><rect x="33" y="66" width="2" height="68"/><rect x="34" y="134" width="2" height="66"/><rect x="31" y="2" width="3" height="2"/><rect x="28" y="198" width="3" height="2"/><rect x="37" y="2" width="2" height="64"/><rect x="36" y="66" width="2" height="68"/><rect x="35" y="134" width="2" height="66"/><rect x="38" y="2" width="2" height="64"/><rect x="39" y="66" width="2" height="68"/><rect x="40" y="134" width="2" height="66"/><rect x="37" y="2" width="3" height="2"/><rect x="34" y="198" width="3" height="2"/><rect x="163" y="2" width="2" height="64"/><rect x="162" y="66" width="2" height="68"/><rect x="161" y="134" width="2" height="66"/><rect x="164" y="2" width="2" height="64"/><rect x="165" y="66" width="2" height="68"/><rect x="166" y="134" width="2" height="66"/><rect x="163" y="2" width="3" height="2"/><rect x="40" y="198" width="123" height="2"/><rect x="172" y="2" width="2" height="64"/><rect x="171" y="66" width="2" height="68"/><rect x="170" y="134" width="2" height="66"/><rect x="176" y="2" width="2" height="64"/><rect x="177" y="66" width="2" height="68"/><rect x="178" y="134" width="2" height="66"/><rect x="172" y="2" width="6" height="2"/><rect x="166" y="198" width="6" height="2"/><rect x="181" y="2" width="2" height="64"/><rect x="180" y="66" width="2" height="68"/><rect x="179" y="134" width="2" height="66"/><rect x="182" y="2" width="2" height="64"/><rect x="183" y="66" width="2" height="68"/><rect x="184" y="134" width="2" height="66"/><rect x="181" y="2" width="3" height="2"/><rect x="178" y="198" width="3" height="2"/><rect x="187" y="2" width="2" height="64"/><rect x="186" y="66" width="2" height="68"/><rect x="185" y="134" width="2" height="66"/><rect x="188" y="2" width="2" height="64"/><rect x="189" y="66" width="2" height="68"/><rect x="190" y="134" width="2" height="66"/><rect x="187" y="2" width="3" height="2"/><rect x="184" y="198" width="3" height="2"/><rect x="193" y="2" width="2" height="64"/><rect x="192" y="66" width="2" height="68"/><rect x="191" y="134" width="2" height="66"/><rect x="194" y="2" width="2" height="64"/><rect x="195" y="66" width="2" height="68"/><rect x="196" y="134" width="2" height="66"/><rect x="193" y="2" width="3" height="2"/><rect x="190" y="198" width="3" height="2"/><rect x="203" y="2" width="2" height="64"/><rect x="202" y="66" width="2" height="68"/><rect x="201" y="134" width="2" height="66"/><rect x="204" y="2" width="2" height="64"/><rect x="205" y="66" width="2" height="68"/><rect x="206" y="134" width="2" height="66"/><rect x="203" y="2" width="3" height="2"/><rect x="196" y="198" width="7" height="2"/><rect x="212" y="2" width="2" height="64"/><rect x="211" y="66" width="2" height="68"/><rect x="210" y="134" width="2" height="66"/><rect x="216" y="2" width="2" height="64"/><rect x="217" y="66" width="2" height="68"/><rect x="218" y="134" width="2" height="66"/><rect x="212" y="2" width="6" height="2"/><rect x="206" y="198" width="6" height="2"/><rect x="227" y="2" width="2" height="64"/><rect x="226" y="66" width="2" height="68"/><rect x="225" y="134" width="2" height="66"/><rect x="270" y="2" width="2" height="64"/><rect x="271" y="66" width="2" height="68"/><rect x="272" y="134" width="2" height="66"/><rect x="227" y="2" width="45" height="2"/><rect x="218" y="198" width="9" height="2"/><rect x="275" y="2" width="2" height="64"/><rect x="274" y="66" width="2" height="68"/><rect x="273" y="134" width="2" height="66"/><rect x="285" y="2" width="2" height="64"/><rect x="286" y="66" width="2" height="68"/><rect x="287" y="134" width="2" height="66"/><rect x="275" y="2" width="12" height="2"/><rect x="272" y="198" width="3" height="2"/><rect x="290" y="2" width="2" height="64"/><rect x="289" y="66" width="2" height="68"/><rect x="288" y="134" width="2" height="66"/><rect x="291" y="2" width="2" height="64"/><rect x="292" y="66" width="2" height="68"/><rect x="293" y="134" width="2" height="66"/><rect x="290" y="2" width="3" height="2"/><rect x="287" y="198" width="3" height="2"/><rect x="296" y="2" width="2" height="64"/><rect x="295" y="66" width="2" height="68"/><rect x="294" y="134" width="2" height="66"/><rect x="297" y="2" width="2" height="64"/><rect x="298" y="66" width="2" height="68"/><rect x="299" y="134" width="2" height="66"/><rect x="296" y="2" width="3" height="2"/><rect x="293" y="198" width="3" height="2"/><rect x="302" y="2" width="2" height="64"/><rect x="301" y="66" width="2" height="68"/><rect x="300" y="134" width="2" height="66"/><rect x="306" y="2" width="2" height="64"/><rect x="307" y="66" width="2" height="68"/><rect x="308" y="134" width="2" height="66"/><rect x="302" y="2" width="6" height="2"/><rect x="299" y="198" width="3" height="2"/><rect x="314" y="2" width="2" height="64"/><rect x="313" y="66" width="2" height="68"/><rect x="312" y="134" width="2" height="66"/><rect x="315" y="2" width="2" height="64"/><rect x="316" y="66" width="2" height="68"/><rect x="317" y="134" width="2" height="66"/><rect x="314" y="2" width="3" height="2"/><rect x="308" y="198" width="6" height="2"/><rect x="320" y="2" width="2" height="64"/><rect x="319" y="66" width="2" height="68"/><rect x="318" y="134" width="2" height="66"/><rect x="321" y="2" width="2" height="64"/><rect x="322" y="66" width="2" height="68"/><rect x="323" y="134" width="2" height="66"/><rect x="320" y="2" width="3" height="2"/><rect x="317" y="198" width="3" height="2"/><rect x="329" y="2" width="2" height="64"/><rect x="328" y="66" width="2" height="68"/><rect x="327" y="134" width="2" height="66"/><rect x="333" y="2" width="2" height="64"/><rect x="334" y="66" width="2" height="68"/><rect x="335" y="134" width="2" height="66"/><rect x="329" y="2" width="6" height="2"/><rect x="323" y="198" width="6" height="2"/><rect x="368" y="2" width="2" height="64"/><rect x="367" y="66" width="2" height="68"/><rect x="366" y="134" width="2" height="66"/><rect x="369" y="2" width="2" height="64"/><rect x="370" y="66" width="2" height="68"/><rect x="371" y="134" width="2" height="66"/><rect x="368" y="2" width="3" height="2"/><rect x="335" y="198" width="33" height="2"/><rect x="377" y="2" width="2" height="64"/><rect x="376" y="66" width="2" height="68"/><rect x="375" y="134" width="2" height="66"/><rect x="378" y="2" width="2" height="64"/><rect x="379" y="66" width="2" height="68"/><rect x="380" y="134" width="2" height="66"/><rect x="377" y="2" width="3" height="2"/><rect x="371" y="198" width="6" height="2"/><rect x="383" y="2" width="2" height="64"/><rect x="382" y="66" width="2" height="68"/><rect x="381" y="134" width="2" height="66"/><rect x="387" y="2" width="2" height="64"/><rect x="388" y="66" width="2" height="68"/><rect x="389" y="134" width="2" height="66"/><rect x="383" y="2" width="6" height="2"/><rect x="380" y="198" width="3" height="2"/><rect x="392" y="2" width="2" height="64"/><rect x="391" y="66" width="2" height="68"/><rect x="390" y="134" width="2" height="66"/><rect x="393" y="2" width="2" height="64"/><rect x="394" y="66" width="2" height="68"/><rect x="395" y="134" width="2" height="66"/><rect x="392" y="2" width="3" height="2"/><rect x="389" y="198" width="3" height="2"/><rect x="398" y="2" width="2" height="64"/><rect x="397" y="66" width="2" height="68"/><rect x="396" y="134" width="2" height="66"/><rect x="403" y="2" width="2" height="64"/><rect x="404" y="66" width="2" height="68"/><rect x="405" y="134" width="2" height="66"/><rect x="398" y="2" width="7" height="2"/><rect x="395" y="198" width="3" height="2"/><rect x="408" y="2" width="2" height="64"/><rect x="407" y="66" width="2" height="68"/><rect x="406" y="134" width="2" height="66"/><rect x="412" y="2" width="2" height="64"/><rect x="413" y="66" width="2" height="68"/><rect x="414" y="134" width="2" height="66"/><rect x="408" y="2" width="6" height="2"/><rect x="405" y="198" width="3" height="2"/><rect x="417" y="2" width="2" height="64"/><rect x="416" y="66" width="2" height="68"/><rect x="415" y="134" width="2" height="66"/><rect x="418" y="2" width="2" height="64"/><rect x="419" y="66" width="2" height="68"/><rect x="420" y="134" width="2" height="66"/><rect x="417" y="2" width="3" height="2"/><rect x="414" y="198" width="3" height="2"/><rect x="423" y="2" width="2" height="64"/><rect x="422" y="66" width="2" height="68"/><rect x="421" y="134" width="2" height="66"/><rect x="511" y="2" width="2" height="64"/><rect x="512" y="66" width="2" height="68"/><rect x="513" y="134" width="2" height="66"/><rect x="423" y="2" width="90" height="2"/><rect x="420" y="198" width="3" height="2"/><rect x="516" y="2" width="2" height="64"/><rect x="515" y="66" width="2" height="68"/><rect x="514" y="134" width="2" height="66"/><rect x="517" y="2" width="2" height="64"/><rect x="518" y="66" width="2" height="68"/><rect x="519" y="134" width="2" height="66"/><rect x="516" y="2" width="3" height="2"/><rect x="513" y="198" width="3" height="2"/><rect x="522" y="2" width="2" height="64"/><rect x="521" y="66" width="2" height="68"/><rect x="520" y="134" width="2" height="66"/><rect x="523" y="2" width="2" height="64"/><rect x="524" y="66" width="2" height="68"/><rect x="525" y="134" width="2" height="66"/><rect x="522" y="2" width="3" height="2"/><rect x="519" y="198" width="3" height="2"/><rect x="528" y="2" width="2" height="64"/><rect x="527" y="66" width="2" height="68"/><rect x="526" y="134" width="2" height="66"/><rect x="529" y="2" width="2" height="64"/><rect x="530" y="66" width="2" height="68"/><rect x="531" y="134" width="2" height="66"/><rect x="528" y="2" width="3" height="2"/><rect x="525" y="198" width="3" height="2"/><rect x="534" y="2" width="2" height="64"/><rect x="533" y="66" width="2" height="68"/><rect x="532" y="134" width="2" height="66"/><rect x="535" y="2" width="2" height="64"/><rect x="536" y="66" width="2" height="68"/><rect x="537" y="134" width="2" height="66"/><rect x="534" y="2" width="3" height="2"/><rect x="531" y="198" width="3" height="2"/><rect x="540" y="2" width="2" height="64"/><rect x="539" y="66" width="2" height="68"/><rect x="538" y="134" width="2" height="66"/><rect x="541" y="2" width="2" height="64"/><rect x="542" y="66" width="2" height="68"/><rect x="543" y="134" width="2" height="66"/><rect x="540" y="2" width="3" height="2"/><rect x="537" y="198" width="3" height="2"/><rect x="546" y="2" width="2" height="64"/><rect x="545" y="66" width="2" height="68"/><rect x="544" y="134" width="2" height="66"/><rect x="547" y="2" width="2" height="64"/><rect x="548" y="66" width="2" height="68"/><rect x="549" y="134" width="2" height="66"/><rect x="546" y="2" width="3" height="2"/><rect x="543" y="198" width="3" height="2"/><rect x="552" y="2" width="2" height="64"/><rect x="551" y="66" width="2" height="68"/><rect x="550" y="134" width="2" height="66"/><rect x="553" y="2" width="2" height="64"/><rect x="554" y="66" width="2" height="68"/><rect x="555" y="134" width="2" height="66"/><rect x="552" y="2" width="3" height="2"/><rect x="549" y="198" width="3" height="2"/><rect x="558" y="2" width="2" height="64"/><rect x="557" y="66" width="2" height="68"/><rect x="556" y="134" width="2" height="66"/><rect x="559" y="2" width="2" height="64"/><rect x="560" y="66" width="2" height="68"/><rect x="561" y="134" width="2" height="66"/><rect x="558" y="2" width="3" height="2"/><rect x="555" y="198" width="3" height="2"/><rect x="564" y="2" width="2" height="64"/><rect x="563" y="66" width="2" height="68"/><rect x="562" y="134" width="2" height="66"/><rect x="565" y="2" width="2" height="64"/><rect x="566" y="66" width="2" height="68"/><rect x="567" y="134" width="2" height="66"/><rect x="564" y="2" width="3" height="2"/><rect x="561" y="198" width="3" height="2"/><rect x="576" y="2" width="2" height="64"/><rect x="575" y="66" width="2" height="68"/><rect x="574" y="134" width="2" height="66"/><rect x="592" y="2" width="2" height="64"/><rect x="593" y="66" width="2" height="68"/><rect x="594" y="134" width="2" height="66"/><rect x="576" y="2" width="18" height="2"/><rect x="567" y="198" width="9" height="2"/><rect x="594" y="198" width="7" height="2"/></g>
<polyline points="2,152.5 3.5,150.8 5.5,150.8 7,152.5 8,152.5 9.5,150.8 11.5,150.8 13,152.5 14,152.5 15.5,150.8 17.5,150.8 19,152.5 20,152.5 21.5,150.8 23.5,150.8 25,152.5 26,152.5 27.5,150.8 29.5,150.8 31,152.5 32,152.5 33.5,150.8 35.5,150.8 37,152.5 38,152.5 39.5,150.8 41.5,150.8 43,152.5 43,152.5 128.8,152.5 131,95 152.7,95 154.6,82.4 165,82.4 168.3,78.3 176,77.5 186.5,77.5 190,76 218.9,76 223.8,73.2 237.5,73.2 241.4,71.2 273.7,71.2 275.7,88.3 278.6,100 283.5,103 293.3,104.5 301.1,103 305,101 309,103.5 314,101.5 319,103 322,102 326,103 327,101.5 334,104 366.5,104 368,94 372,83 377,77 378.3,75.5 424.3,75.5 425,74.8 511.9,74.8 514,94 516,124 519,144 522,151 527,153.5 560,154 563,156 567,155 572,154 575,151 577.2,147 581,159 584,167 589,170 597.8,170.5 601,176" fill="none" stroke="#0008C0" stroke-width="2.2"/>
<line x1="43.5" y1="2" x2="43.5" y2="201" stroke="#000" stroke-width="1" stroke-dasharray="4,3"/>
<rect x="1.5" y="1.5" width="600.0" height="200.0" fill="none" stroke="#000" stroke-width="1.3"/>
</svg>
</body></html>
